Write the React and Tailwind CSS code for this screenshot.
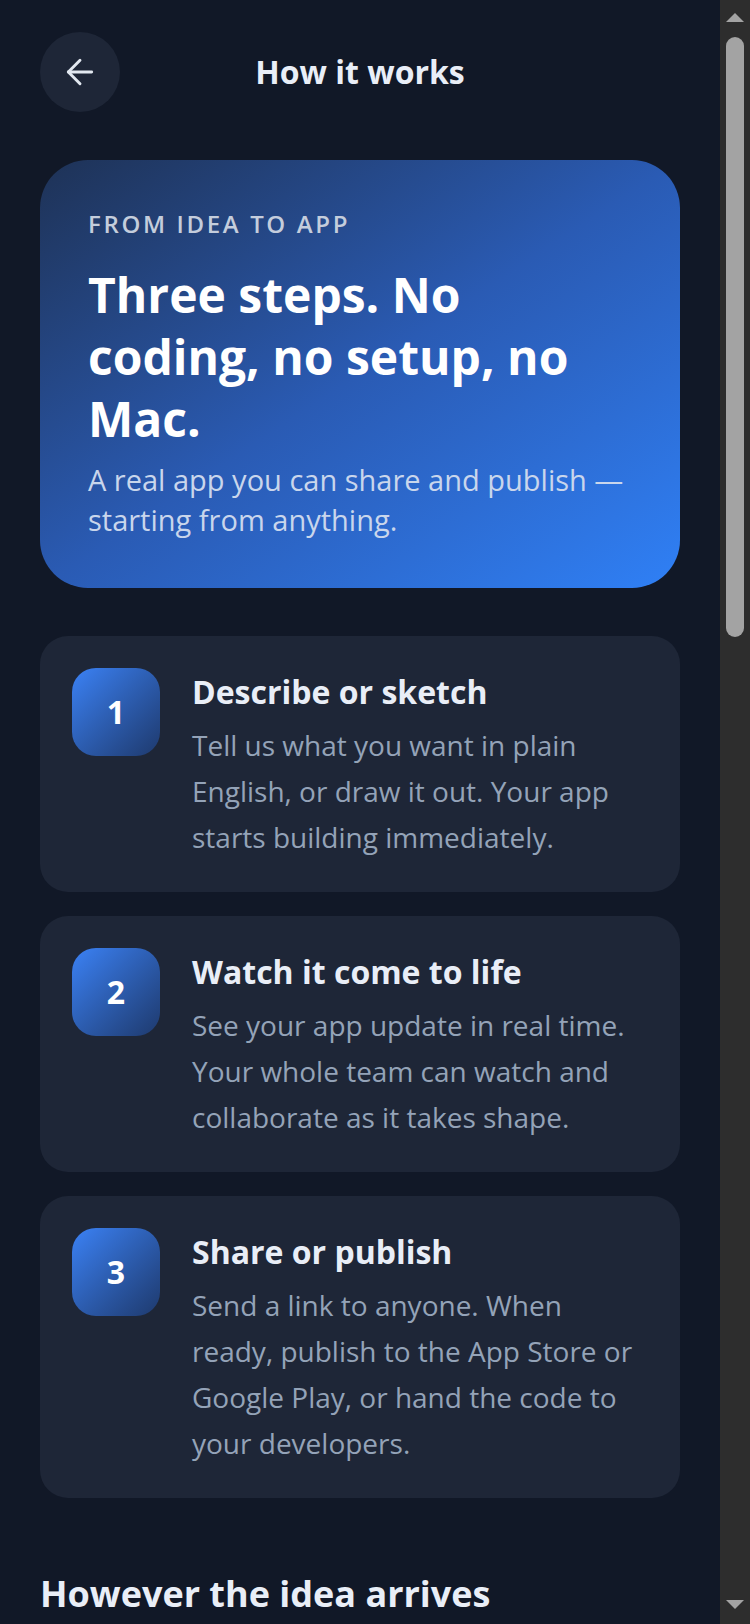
import { ArrowLeft } from "lucide-react";

const steps = [
  {
    n: 1,
    title: "Describe or sketch",
    body: "Tell us what you want in plain English, or draw it out. Your app starts building immediately.",
  },
  {
    n: 2,
    title: "Watch it come to life",
    body: "See your app update in real time. Your whole team can watch and collaborate as it takes shape.",
  },
  {
    n: 3,
    title: "Share or publish",
    body: "Send a link to anyone. When ready, publish to the App Store or Google Play, or hand the code to your developers.",
  },
];

const sources = [
  { title: "A sentence", body: "Type a few words about the app you have in mind and we take it from there." },
  { title: "A sketch", body: "Snap a photo of a napkin drawing or a whiteboard after a meeting." },
  { title: "A screenshot", body: "Start from an app you already like and make it your own." },
  { title: "A document", body: "Paste a brief, a spec or a list of features your team wrote up." },
];

const perks = [
  "A working app on iPhone and Android",
  "A shareable link for testers",
  "Publishing to the App Store and Google Play",
  "Full source code you own",
  "Updates whenever you describe a change",
];

const StepCard = ({ step }) => (
  <div className="flex gap-8 rounded-[28px] bg-[#1e2637] p-8">
    <div className="flex h-[88px] w-[88px] shrink-0 items-center justify-center rounded-[24px] bg-gradient-to-br from-[#3b82f6] to-[#1e3a6e] text-[32px] font-bold text-white">
      {step.n}
    </div>
    <div className="flex-1">
      <h3 className="text-[32px] font-bold leading-[48px] text-[#e9eef7]">{step.title}</h3>
      <p className="mt-[6px] text-[28px] leading-[46px] text-[#94a3b8]">{step.body}</p>
    </div>
  </div>
);

// classic scrollbar look from the screenshot
const Scrollbar = () => (
  <div className="flex w-[30px] shrink-0 flex-col items-center bg-[#2d2d2d]">
    <svg width="18" height="9" viewBox="0 0 18 9" className="mt-[13px]">
      <polygon points="9,0 18,9 0,9" fill="#a3a3a3" />
    </svg>
    <div className="mt-[15px] h-[600px] w-[18px] rounded-full bg-[#a3a3a3]" />
    <div className="flex-1" />
    <svg width="18" height="9" viewBox="0 0 18 9" className="mb-[15px]">
      <polygon points="0,0 18,0 9,9" fill="#a3a3a3" />
    </svg>
  </div>
);

const App = () => {
  return (
    <div
      className="flex h-[1624px] overflow-hidden bg-[#111827]"
      style={{ fontFamily: '"Open Sans", "Noto Sans", sans-serif' }}
    >
      <div className="min-w-0 flex-1 px-10 pb-24 pt-8">
        <div className="flex items-center">
          <button className="flex h-20 w-20 shrink-0 items-center justify-center rounded-full bg-[#1e2637] text-[#e2e8f0]">
            <ArrowLeft size={40} strokeWidth={1.75} />
          </button>
          <h1 className="flex-1 text-center text-[32px] font-bold text-[#e9eef7]">How it works</h1>
          <div className="w-20 shrink-0" />
        </div>

        <div className="mt-12 rounded-[48px] bg-gradient-to-br from-[#1e3256] via-[#2a5bb4] to-[#2f80f6] p-12">
          <p className="text-[24px] font-semibold uppercase leading-[32px] tracking-[0.11em] text-[#c4cddc]">
            From idea to app
          </p>
          <h2 className="mt-6 text-[48px] font-bold leading-[62px] text-white">
            Three steps. No coding, no setup, no Mac.
          </h2>
          <p className="mt-[10px] text-[29px] leading-[40px] text-[#c9d6ec]">
            A real app you can share and publish — starting from anything.
          </p>
        </div>

        <div className="mt-12 flex flex-col gap-6">
          {steps.map((s) => (
            <StepCard key={s.n} step={s} />
          ))}
        </div>

        <h2 className="mt-[72px] text-[36px] font-bold leading-[47px] text-[#e9eef7]">
          However the idea arrives
        </h2>
        <div className="mt-6 flex flex-col gap-6">
          {sources.map((s) => (
            <div key={s.title} className="rounded-[28px] bg-[#1e2637] p-8">
              <h3 className="text-[30px] font-bold leading-[44px] text-[#e9eef7]">{s.title}</h3>
              <p className="mt-2 text-[28px] leading-[46px] text-[#94a3b8]">{s.body}</p>
            </div>
          ))}
        </div>

        <h2 className="mt-16 text-[36px] font-bold leading-[47px] text-[#e9eef7]">What you get</h2>
        <ul className="mt-6 flex flex-col gap-4">
          {perks.map((p) => (
            <li key={p} className="flex items-center gap-5 rounded-[28px] bg-[#1e2637] px-8 py-7">
              <span className="h-4 w-4 shrink-0 rounded-full bg-[#3b82f6]" />
              <span className="text-[28px] leading-[40px] text-[#cbd5e1]">{p}</span>
            </li>
          ))}
        </ul>

        <div className="mt-16 rounded-[48px] bg-gradient-to-br from-[#1e3256] via-[#2a5bb4] to-[#2f80f6] p-12">
          <h2 className="text-[40px] font-bold leading-[54px] text-white">Ready when you are.</h2>
          <p className="mt-3 text-[28px] leading-[42px] text-[#c9d6ec]">
            Describe your first app in a sentence. It takes less than a minute.
          </p>
          <button className="mt-8 w-full rounded-full bg-white py-6 text-[30px] font-bold text-[#1e3a6e]">
            Start building
          </button>
        </div>
      </div>
      <Scrollbar />
    </div>
  );
};

export default App;
